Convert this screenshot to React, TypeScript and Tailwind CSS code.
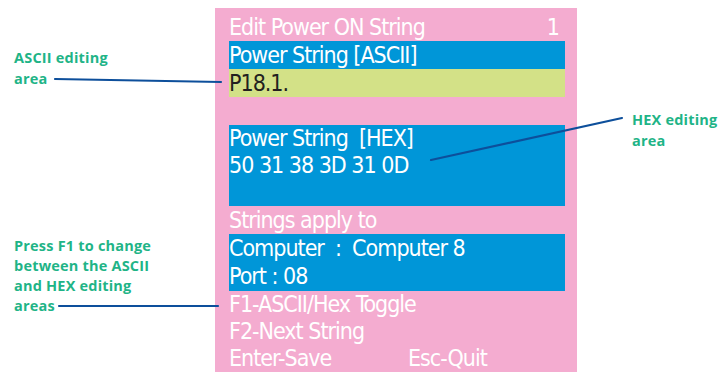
const screen = '"Liberation Sans Narrow", "DejaVu Sans Condensed", "Roboto Condensed", sans-serif';
const label = '"Open Sans", "Noto Sans", sans-serif';

const Row = ({ children, className = '' }: { children: React.ReactNode; className?: string }) => (
  <div className={`h-[28px] leading-[28px] whitespace-pre ${className}`}>{children}</div>
);

export default function App() {
  return (
    <div className="relative w-[722px] h-[372px] bg-white overflow-hidden">
      <div className="flex h-full pt-[8px]">
        {/* left annotations */}
        <div
          className="w-[215px] shrink-0 relative text-[#1fb487] font-bold text-[14.5px] leading-[20px] tracking-[0.2px]"
          style={{ fontFamily: label }}
        >
          <div className="absolute left-[14px] top-[39px] leading-[21px]">
            ASCII editing
            <br />
            area
          </div>
          <div className="absolute left-[14px] top-[228px]">
            Press F1 to change
            <br />
            between the ASCII
            <br />
            and HEX editing
            <br />
            areas
          </div>
        </div>

        {/* OSD panel */}
        <div
          className="w-[362px] shrink-0 bg-[#f4acd0] pl-[14px] pr-[12px] pt-[5px] text-white text-[23px] tracking-[-1px]"
          style={{ fontFamily: screen }}
        >
          <div className="flex justify-between pr-[6px]">
            <Row>Edit Power ON String</Row>
            <Row>1</Row>
          </div>
          <Row className="bg-[#0096d8]">Power String [ASCII]</Row>
          <Row className="bg-[#d3e187] text-[#231f20]">P18.1.</Row>
          <Row> </Row>
          <div className="bg-[#0096d8] h-[81px] leading-[27px] whitespace-pre">
            <div>Power String  [HEX]</div>
            <div>50 31 38 3D 31 0D</div>
          </div>
          <Row>Strings apply to</Row>
          <div className="bg-[#0096d8] h-[57px] leading-[28px] whitespace-pre">
            <div>Computer  :  Computer 8</div>
            <div>Port : 08</div>
          </div>
          <div className="leading-[27px] whitespace-pre">
            <div>F1-ASCII/Hex Toggle</div>
            <div>F2-Next String</div>
            <div className="flex">
              <span className="w-[179px]">Enter-Save</span>
              <span>Esc-Quit</span>
            </div>
          </div>
        </div>

        {/* right annotation */}
        <div
          className="flex-1 relative text-[#1fb487] font-bold text-[14.5px] leading-[20.5px] tracking-[0.2px]"
          style={{ fontFamily: label }}
        >
          <div className="absolute left-[55px] top-[102px]">
            HEX editing
            <br />
            area
          </div>
        </div>
      </div>

      {/* leader lines */}
      <svg className="absolute inset-0 pointer-events-none" width="722" height="372">
        <g stroke="#0d4f9b" strokeWidth="2.2" strokeLinecap="round" fill="none">
          <line x1="55" y1="79" x2="221" y2="82" />
          <line x1="431" y1="160" x2="622" y2="118" />
          <line x1="59" y1="306" x2="218" y2="306" />
        </g>
      </svg>
    </div>
  );
}
